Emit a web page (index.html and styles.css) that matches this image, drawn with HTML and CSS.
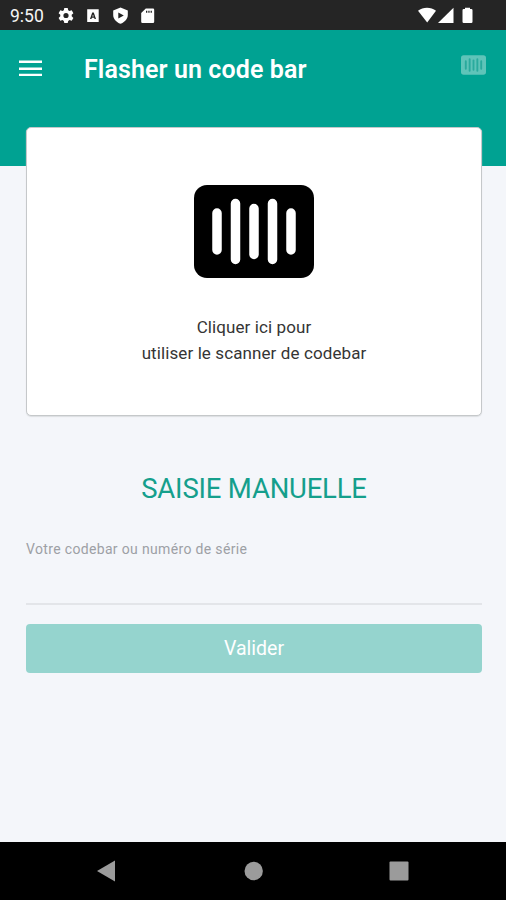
FILE: index.html
```html
<!DOCTYPE html>
<html lang="fr">
<head>
<meta charset="utf-8">
<title>Flasher un code bar</title>
<link rel="stylesheet" href="styles.css">
</head>
<body>
<div class="status">
  <span class="clock">9:50</span>
  <svg class="status-left" width="100" height="18" viewBox="0 0 100 18" fill="#fff">
    <path fill-rule="evenodd" d="M6.300 1h3.400l.5 2.200 1.300.8 2.200-.7 1.700 2.900-1.700 1.600v1.500l1.700 1.600-1.700 2.900-2.200-.7-1.300.8-.5 2.200H6.300l-.5-2.200-1.300-.8-2.200.7L.6 10.900l1.700-1.600V7.800L.6 6.200l1.700-2.900 2.200.7 1.300-.8zM8 5.900a2.600 2.600 0 1 0 0 5.200 2.600 2.600 0 0 0 0-5.200z"/>
    <path fill-rule="evenodd" d="M29.200 2.300h11.500v12.700H29.200zM34.200 5.500l-2.200 6.500h1.400l.5-1.300h2.200l.5 1.300H38l-2.200-6.500zm.8 1.900.7 2.100h-1.400z"/>
    <path fill-rule="evenodd" d="M62.500.6l7.300 2.800v4.500c0 4-3 7.200-7.300 8.800-4.300-1.600-7.300-4.800-7.300-8.800V3.400zM60.300 5.500v6l5.500-3z"/>
    <path fill-rule="evenodd" d="M87.800 1.500h7.200q1.200 0 1.200 1.200v12.100q0 1.200-1.200 1.200H84.400q-1.200 0-1.200-1.200V6.100zM88 3.800v2h1.300v-2zm2.300 0v2h1.300v-2zm2.300 0v2h1.300v-2z"/>
  </svg>
  <svg class="status-right" width="58" height="18" viewBox="0 0 58 18" fill="#fff">
    <path d="M0 3.700C5-.2 13-.2 18 3.700L9.200 15.500z"/>
    <path d="M20 16 35.500.7V16z"/>
    <path d="M44.500 3.200q0-1.200 1.200-1.200H47V.8h5V2h1.300q1.200 0 1.200 1.200v11.600q0 1.200-1.200 1.200h-7.600q-1.200 0-1.200-1.200z"/>
  </svg>
</div>
<header class="header">
  <svg class="menu" width="24" height="17" viewBox="0 0 24 17" stroke="#fff" stroke-width="2.400"><path d="M0 1.700h23M0 8.700h23M0 14.900h23"/></svg>
  <h1 class="title">Flasher un code bar</h1>
  <svg class="scan" width="25" height="20" viewBox="0 0 120 93">
    <rect class="scan-body" width="120" height="93" rx="13"/>
    <path class="scan-bars" d="M23 28v37M41.500 19v55M60 24v45M78.500 19v55M97 28v37"/>
  </svg>
</header>
<main class="content">
  <section class="card">
    <svg class="barcode" width="120" height="93" viewBox="0 0 120 93">
      <rect width="120" height="93" rx="13"/>
      <path d="M23 28v37M41.500 18.500v56M60 23.500v46M78.500 18.500v56M97 28v37" stroke="#fff" stroke-width="9.500" stroke-linecap="round"/>
    </svg>
    <p class="hint">Cliquer ici pour<br>utiliser le scanner de codebar</p>
  </section>
  <h2 class="manual">SAISIE MANUELLE</h2>
  <div class="field">Votre codebar ou numéro de série</div>
  <button class="submit">Valider</button>
</main>
<nav class="nav">
  <svg width="506" height="58" viewBox="0 0 506 58" fill="#9b9b9b"><path d="M97 29 115 18.500v21z"/><circle cx="253.700" cy="29" r="9.200"/><rect x="389.500" y="19.500" width="19" height="19" rx="1"/></svg>
</nav>
</body>
</html>
```
FILE: styles.css
```css
* { box-sizing: border-box; }
body {
  margin: 0;
  height: 900px;
  display: flex;
  flex-direction: column;
  background: #f4f6fa;
  font-family: Roboto, "Liberation Sans", sans-serif;
  overflow: hidden;
}
h1, h2, p { margin: 0; }
svg { display: block; flex: none; }
.status {
  height: 30px;
  flex: none;
  display: flex;
  align-items: flex-start;
  padding: 7px 30px 0 10px;
  background: #252525;
}
.clock {
  width: 48px;
  font-size: 17.500px;
  line-height: 19px;
  color: #f5f5f5;
}
.status-right { margin-left: auto; }
.header {
  height: 136px;
  flex: none;
  display: flex;
  align-items: flex-start;
  padding: 24px 20px 0 19px;
  background: #00a292;
}
.menu { margin-top: 6px; }
.title {
  margin-left: 41px;
  font-size: 25px;
  line-height: 32px;
  font-weight: 570;
  letter-spacing: 0.1px;
  color: #fff;
  white-space: nowrap;
}
.scan { margin: 1px 0 0 auto; }
.scan-body { fill: #5fc4b9; }
.scan-bars { stroke: #2aaa9d; stroke-width: 9; stroke-linecap: round; }
.content {
  flex: 1;
  display: flex;
  flex-direction: column;
  padding: 0 24px 0 26px;
  margin-top: -39px;
}
.card {
  height: 289px;
  display: flex;
  flex-direction: column;
  align-items: center;
  padding: 57px 0 0;
  background: #fff;
  border: 1px solid #c5c8ca;
  border-radius: 5px;
  box-shadow: 0 1px 1px #dcdfe2;
}
.hint {
  margin-top: 36px;
  font-size: 17px;
  line-height: 26px;
  letter-spacing: 0.1px;
  text-align: center;
  color: #353535;
}
.manual {
  margin-top: 55px;
  font-size: 27.500px;
  line-height: 36px;
  font-weight: 380;
  letter-spacing: -0.2px;
  text-align: center;
  color: #159f8c;
}
.field {
  height: 73px;
  margin-top: 25px;
  padding-top: 8px;
  border-bottom: 2px solid #e3e5e9;
  font-size: 14px;
  line-height: 18px;
  letter-spacing: 0.340px;
  color: #9da0a5;
}
.submit {
  height: 49px;
  margin-top: 19px;
  padding: 0;
  border: 0;
  border-radius: 4px;
  background: #95d4ce;
  font: 400 19.500px/49px Roboto, sans-serif;
  color: #fff;
}
.nav {
  height: 58px;
  flex: none;
  background: #000;
}
```
